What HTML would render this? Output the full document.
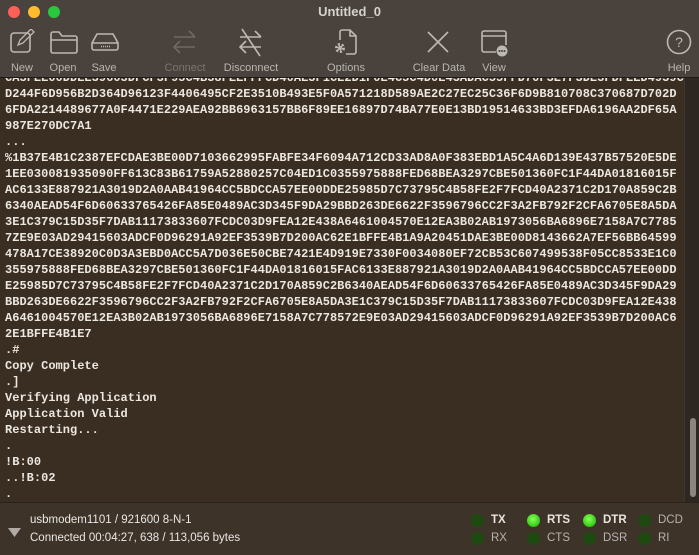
<!DOCTYPE html>
<html><head><style>
*{margin:0;padding:0;box-sizing:border-box}
body{width:699px;height:555px;overflow:hidden;background:#3a2e22;font-family:"Liberation Sans",sans-serif;position:relative}
#term{position:absolute;left:0;top:70px;width:684px;height:432px;background:#3a2e22;overflow:hidden}
#term pre{font-family:"Liberation Mono",monospace;font-size:12px;line-height:16px;color:#ebe7e1;padding-left:5px;white-space:pre;font-weight:bold;letter-spacing:0.02px}
#sb{position:absolute;left:684px;top:78px;width:15px;height:424px;background:#2e2620;border-left:1px solid #3f362e}
#thumb{position:absolute;left:690px;top:418px;width:6px;height:79px;border-radius:3px;background:#8a8580}
#tb{position:absolute;left:0;top:0;width:699px;height:78px;background:#4a433d;border-bottom:1px solid #1e1a17}
.title{position:absolute;top:4px;width:699px;text-align:center;color:#d6d2ce;font-weight:bold;font-size:13px}
.dot{position:absolute;top:6px;width:12px;height:12px;border-radius:50%}
.lbl{position:absolute;top:62px;font-size:11px;color:#b9b4af;transform:translateX(-50%);white-space:nowrap}
.lbl.dim{color:#7b746e}
svg.ic{position:absolute}
#st{position:absolute;left:0;top:502px;width:699px;height:53px;background:#3d3329;border-top:1px solid #2a231d}
.st{position:absolute;left:30px;font-size:11.5px;color:#ebe7e2}
.led{position:absolute;width:13px;height:13px;border-radius:50%;background:#1e4a12}
.led.on{background:radial-gradient(circle at 45% 40%,#8cff5a,#3bd11e 60%,#2aa512)}
.ll{position:absolute;font-size:11.5px;color:#b8b3ae}
.ll.b{font-weight:bold;color:#e8e4df}
</style></head><body>
<div id="term"><pre>CA3FEE00DDEE39603DFCF3F95C4B38FEEFFFCD40AE3F1CE2D1F0E4C5C4D0E43ADAC55FFD70F3E7F3DE3FDFEED4939C0
D244F6D956B2D364D96123F4406495CF2E3510B493E5F0A571218D589AE2C27EC25C36F6D9B810708C370687D702D
6FDA2214489677A0F4471E229AEA92BB6963157BB6F89EE16897D74BA77E0E13BD19514633BD3EFDA6196AA2DF65A
987E270DC7A1
...
%1B37E4B1C2387EFCDAE3BE00D7103662995FABFE34F6094A712CD33AD8A0F383EBD1A5C4A6D139E437B57520E5DE
1EE030081935090FF613C83B61759A52880257C04ED1C0355975888FED68BEA3297CBE501360FC1F44DA01816015F
AC6133E887921A3019D2A0AAB41964CC5BDCCA57EE00DDE25985D7C73795C4B58FE2F7FCD40A2371C2D170A859C2B
6340AEAD54F6D60633765426FA85E0489AC3D345F9DA29BBD263DE6622F3596796CC2F3A2FB792F2CFA6705E8A5DA
3E1C379C15D35F7DAB11173833607FCDC03D9FEA12E438A6461004570E12EA3B02AB1973056BA6896E7158A7C7785
7ZE9E03AD29415603ADCF0D96291A92EF3539B7D200AC62E1BFFE4B1A9A20451DAE3BE00D8143662A7EF56BB64599
478A17CE38920C0D3A3EBD0ACC5A7D036E50CBE7421E4D919E7330F0034080EF72CB53C607499538F05CC8533E1C0
355975888FED68BEA3297CBE501360FC1F44DA01816015FAC6133E887921A3019D2A0AAB41964CC5BDCCA57EE00DD
E25985D7C73795C4B58FE2F7FCD40A2371C2D170A859C2B6340AEAD54F6D60633765426FA85E0489AC3D345F9DA29
BBD263DE6622F3596796CC2F3A2FB792F2CFA6705E8A5DA3E1C379C15D35F7DAB11173833607FCDC03D9FEA12E438
A6461004570E12EA3B02AB1973056BA6896E7158A7C778572E9E03AD29415603ADCF0D96291A92EF3539B7D200AC6
2E1BFFE4B1E7
.#
Copy Complete
.]
Verifying Application
Application Valid
Restarting...
.
!B:00
..!B:02
.</pre></div>
<div id="sb"></div><div id="thumb"></div>

<div id="tb">
<div class="dot" style="left:8px;background:#fe5f57"></div>
<div class="dot" style="left:28px;background:#febc2e"></div>
<div class="dot" style="left:48px;background:#28c840"></div>
<div class="title">Untitled_0</div>

<svg class="ic" style="left:9px;top:29px" width="28" height="26" viewBox="0 0 28 26" fill="none" stroke="#bdb8b3" stroke-width="1.6"><rect x="2" y="4" width="19" height="19" rx="3"/><path d="M9 16l2-5 11-11 3 3-11 11z" stroke-width="1.3"/></svg>
<svg class="ic" style="left:49px;top:30px" width="30" height="24" viewBox="0 0 30 24" fill="none" stroke="#bdb8b3" stroke-width="1.6"><path d="M2 4v17a2 2 0 0 0 2 2h22a2 2 0 0 0 2-2V8a2 2 0 0 0-2-2H13l-3-4H4a2 2 0 0 0-2 2z"/><path d="M2 10h26"/></svg>
<svg class="ic" style="left:90px;top:32px" width="30" height="20" viewBox="0 0 30 20" fill="none" stroke="#bdb8b3" stroke-width="1.6"><path d="M2 11L7 2h16l5 9v5a2 2 0 0 1-2 2H4a2 2 0 0 1-2-2z"/><path d="M2 11h26"/><path d="M11 14.5h10" stroke-dasharray="1 1"/></svg>
<svg class="ic" style="left:171px;top:28px" width="28" height="28" viewBox="0 0 28 28" fill="none" stroke="#6f6862" stroke-width="1.6"><path d="M3 9h21M18 3l6 6M24 19H3M9 13l-6 6 6 6"/></svg>
<svg class="ic" style="left:237px;top:27px" width="28" height="30" viewBox="0 0 28 30" fill="none" stroke="#bdb8b3" stroke-width="1.6"><path d="M3 10h21M18 4l6 6M24 20H3M9 14l-6 6 6 6M5 2l18 27"/></svg>
<svg class="ic" style="left:332px;top:28px" width="28" height="30" viewBox="0 0 28 30" fill="none" stroke="#bdb8b3" stroke-width="1.6"><path d="M8 12V4a2 2 0 0 1 2-2h8l6 6v16a2 2 0 0 1-2 2h-8M18 2v6h6"/><circle cx="8" cy="20" r="3.5" stroke-width="3" stroke-dasharray="2 1.6"/><circle cx="8" cy="20" r="1.2" fill="#bdb8b3"/></svg>
<svg class="ic" style="left:426px;top:30px" width="24" height="24" viewBox="0 0 24 24" fill="none" stroke="#bdb8b3" stroke-width="1.6"><path d="M2 2l20 20M22 2L2 22"/></svg>
<svg class="ic" style="left:480px;top:29px" width="30" height="28" viewBox="0 0 30 28" fill="none" stroke="#bdb8b3" stroke-width="1.6"><path d="M16 23H4a2 2 0 0 1-2-2V4a2 2 0 0 1 2-2h20a2 2 0 0 1 2 2v12"/><path d="M2 7h24"/><circle cx="22" cy="22" r="5.5" fill="#bdb8b3" stroke="none"/><circle cx="19.5" cy="22" r="1" fill="#4a433d" stroke="none"/><circle cx="22" cy="22" r="1" fill="#4a433d" stroke="none"/><circle cx="24.5" cy="22" r="1" fill="#4a433d" stroke="none"/></svg>
<svg class="ic" style="left:666px;top:29px" width="26" height="26" viewBox="0 0 26 26" fill="none" stroke="#bdb8b3" stroke-width="1.6"><circle cx="13" cy="13" r="11.5"/><text x="13" y="18" text-anchor="middle" font-family="Liberation Sans" font-size="14" fill="#bdb8b3" stroke="none">?</text></svg>

<div class="lbl" style="left:22px">New</div>
<div class="lbl" style="left:63px">Open</div>
<div class="lbl" style="left:104px">Save</div>
<div class="lbl dim" style="left:185px">Connect</div>
<div class="lbl" style="left:251px">Disconnect</div>
<div class="lbl" style="left:346px">Options</div>
<div class="lbl" style="left:439px">Clear Data</div>
<div class="lbl" style="left:494px">View</div>
<div class="lbl" style="left:679px">Help</div>
</div>

<div id="st">
<svg style="position:absolute;left:8px;top:25px" width="14" height="10"><path d="M0 0h13L6.5 9z" fill="#b0aba6"/></svg>
<div class="st" style="top:11px">usbmodem1101 / 921600 8-N-1</div>
<div class="st" style="top:29px">Connected 00:04:27, 638 / 113,056 bytes</div>
<div class="led" style="left:471px;top:11px"></div><div class="ll b" style="left:491px;top:11px">TX</div>
<div class="led" style="left:471px;top:29px"></div><div class="ll" style="left:491px;top:29px">RX</div>
<div class="led on" style="left:527px;top:11px"></div><div class="ll b" style="left:547px;top:11px">RTS</div>
<div class="led" style="left:527px;top:29px"></div><div class="ll" style="left:547px;top:29px">CTS</div>
<div class="led on" style="left:583px;top:11px"></div><div class="ll b" style="left:603px;top:11px">DTR</div>
<div class="led" style="left:583px;top:29px"></div><div class="ll" style="left:603px;top:29px">DSR</div>
<div class="led" style="left:638px;top:11px"></div><div class="ll" style="left:658px;top:11px">DCD</div>
<div class="led" style="left:638px;top:29px"></div><div class="ll" style="left:658px;top:29px">RI</div>
</div>
</body></html>
